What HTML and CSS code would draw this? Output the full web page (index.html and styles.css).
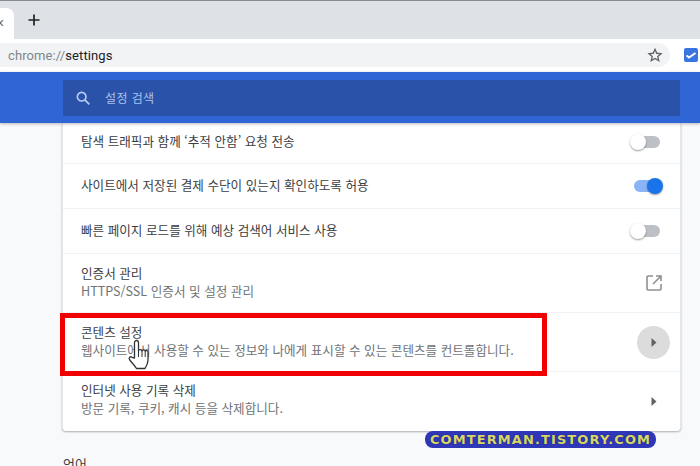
FILE: index.html
```html
<!DOCTYPE html>
<html lang="ko">
<head>
<meta charset="utf-8">
<title>설정</title>
<link rel="stylesheet" href="styles.css">
</head>
<body>
<div class="page">
  <div class="tabstrip">
    <div class="tab"><span class="tab-x">×</span></div>
    <svg class="plus" width="14" height="14" viewBox="0 0 14 14"><path d="M7 1.500V12.500M1.500 7H12.500" stroke="#202124" stroke-width="1.700" fill="none"/></svg>
  </div>
  <div class="toolbar">
    <div class="omnibox">
      <span class="url"><span class="scheme">chrome://</span>settings</span>
      <svg class="star" width="16" height="16" viewBox="0 0 24 24"><path d="M12 3.500l2.600 5.900 6.400.6-4.800 4.300 1.400 6.300L12 17.300l-5.600 3.300 1.400-6.300L3 10l6.400-.6z" fill="none" stroke="#5f6368" stroke-width="2"/></svg>
    </div>
    <div class="ext"><svg width="14" height="14" viewBox="0 0 14 14"><path d="M2.500 7.500L5 9.500l6.500-4.500" fill="none" stroke="#fff" stroke-width="2"/></svg></div>
  </div>
  <header class="bluebar">
    <div class="search">
      <svg width="16" height="16" viewBox="0 0 24 24"><circle cx="10" cy="10" r="6.500" fill="none" stroke="#b7cdf3" stroke-width="2.400"/><path d="M14.500 14.500L21.500 21.500" stroke="#b7cdf3" stroke-width="2.600"/></svg>
      <span class="search-text">설정 검색</span>
    </div>
  </header>
  <main class="content">
    <section class="card">
      <div class="row row-top"><div class="label text">탐색 트래픽과 함께 ‘추적 안함’ 요청 전송</div><span class="toggle"><i class="track"></i><i class="knob"></i></span></div>
      <div class="row row-short"><div class="label text">사이트에서 저장된 결제 수단이 있는지 확인하도록 허용</div><span class="toggle on"><i class="track"></i><i class="knob"></i></span></div>
      <div class="row row-short"><div class="label text">빠른 페이지 로드를 위해 예상 검색어 서비스 사용</div><span class="toggle"><i class="track"></i><i class="knob"></i></span></div>
      <div class="row row-tall">
        <div class="text"><div class="label">인증서 관리</div><div class="sub">HTTPS/SSL 인증서 및 설정 관리</div></div>
        <span class="action"><svg width="16" height="16" viewBox="0 0 16 16"><path d="M7 1H2a1 1 0 0 0-1 1v12a1 1 0 0 0 1 1h12a1 1 0 0 0 1-1V9M10 1h5v5M15 1L7 9" fill="none" stroke="#8d9094" stroke-width="1.600"/></svg></span>
      </div>
      <div class="row row-tall">
        <div class="text"><div class="label">콘텐츠 설정</div><div class="sub">웹사이트에서 사용할 수 있는 정보와 나에게 표시할 수 있는 콘텐츠를 컨트롤합니다.</div></div>
        <span class="action action-hover"><svg width="6" height="9" viewBox="0 0 6 9"><path d="M0.500 0L5.500 4.500L0.500 9Z" fill="#5f6368"/></svg></span>
      </div>
      <div class="row row-tall">
        <div class="text text-last"><div class="label">인터넷 사용 기록 삭제</div><div class="sub">방문 기록, 쿠키, 캐시 등을 삭제합니다.</div></div>
        <span class="action"><svg width="6" height="9" viewBox="0 0 6 9"><path d="M0.500 0L5.500 4.500L0.500 9Z" fill="#5f6368"/></svg></span>
      </div>
    </section>
    <h2 class="section-title">언어</h2>
  </main>
  <div class="redbox"></div>
  <svg class="hand" width="24" height="32" viewBox="0 0 24 32"><path d="M7.500 20V4.500a2 2 0 0 1 4 0V13c.2-1.800 3.300-1.800 3.500 0 .2-1.500 3-1.500 3.200.3 .3-1.200 2.800-1 2.800 1V22c0 4-2 7-3 8.500H9.500C8 28 5 25 2.500 21.500c-1.200-1.800 1-3.500 2.500-2.200z" fill="#fff" stroke="#333" stroke-width="1.300" stroke-linejoin="round"/><path d="M11.500 13v6M15 13v6M18.200 13.500V19" stroke="#333" stroke-width="1" fill="none"/></svg>
  <div class="watermark">COMTERMAN.TISTORY.COM</div>
</div>
</body>
</html>
```
FILE: styles.css
```css
* { box-sizing: border-box; }
html, body { margin: 0; padding: 0; }
body { background: #f8f9fa; font-family: "Noto Sans CJK KR", "Noto Sans", sans-serif; }
.page { position: relative; width: 700px; height: 466px; overflow: hidden; }
.tabstrip { height: 39px; background: #dee1e6; border-top: 1px solid #8a8d90; display: flex; align-items: center; }
.tab { width: 14px; height: 31px; margin-top: 7px; background: #fff; border-top-right-radius: 8px; position: relative; overflow: hidden; }
.tab-x { position: absolute; left: -4px; top: 7px; font: 14px/16px "Liberation Sans", sans-serif; color: #5f6368; }
.plus { margin-left: 13px; margin-top: -1px; }
.toolbar { height: 33px; background: #fff; display: flex; align-items: center; padding-bottom: 1px; }
.omnibox { width: 670px; height: 24px; background: #f1f3f4; border-radius: 0 12px 12px 0; display: flex; align-items: center; justify-content: space-between; padding: 0 7px 0 8px; }
.url { font: 13px "Roboto", "Liberation Sans", sans-serif; color: #202124; letter-spacing: .1px; }
.scheme { color: #80868b; }
.ext { width: 14px; height: 14px; margin-left: 14px; background: #3a74e0; border-radius: 2px; display: flex; }
.bluebar { height: 51px; background: #2f65d4; padding: 8px 20px 7px 63px; box-shadow: 0 1px 3px rgba(60,64,67,.35); position: relative; z-index: 1; }
.search { height: 36px; background: #2a52a8; display: flex; align-items: center; padding-left: 12px; gap: 14px; font-size: 12px; color: #a9c2ee; letter-spacing: .4px; }
.search-text { position: relative; bottom: 1px; }
.content { padding: 0 19px 0 62px; }
.card { background: #fff; border-left: 1px solid #e4e6e9; border-right: 1px solid #e4e6e9; border-radius: 0 0 4px 4px; box-shadow: 0 1px 2px rgba(60,64,67,.4); padding-left: 18px; }
.row { display: flex; align-items: center; justify-content: space-between; border-bottom: 1px solid #f0f1f2; margin-left: -18px; padding: 0 10px 0 18px; }
.row:last-child { border-bottom: 0; }
.row-top { height: 41px; padding-bottom: 3px; }
.row-short { height: 45px; }
.row-tall { height: 59px; }
.text { margin-bottom: 2px; }
.text-last { margin-bottom: 5px; }
.label { font-size: 12.600px; line-height: 18px; color: #3c4043; }
.sub { font-size: 12.600px; line-height: 18px; color: #6f7377; }
.toggle { position: relative; width: 30px; height: 16px; margin-right: 10px; flex: none; }
.track { position: absolute; left: 2px; right: 0; top: 2px; height: 12px; background: #bdc1c6; border-radius: 6px; }
.knob { position: absolute; left: 0; top: 0; width: 16px; height: 16px; background: #fff; border-radius: 50%; box-shadow: 0 1px 2px rgba(0,0,0,.4); }
.toggle.on .track { background: #8ab4f8; right: 0; left: 4px; }
.toggle.on .knob { left: auto; right: -3px; background: #1a73e8; }
.action { width: 33px; height: 33px; border-radius: 50%; display: flex; align-items: center; justify-content: center; flex: none; }
.action-hover { background: #dcdcdc; }
.section-title { margin: 24px 0 0 1px; font-size: 13px; line-height: 18px; font-weight: 400; color: #3c4043; }
.redbox { position: absolute; left: 60px; top: 313px; width: 487px; height: 63px; border: 5px solid #f00000; }
.hand { position: absolute; left: 127px; top: 338px; }
.watermark { position: absolute; left: 425px; top: 431px; width: 231px; height: 17px; background: #2f36b8; border-radius: 8px; color: #d7d767; font: 700 13px/17px "DejaVu Sans", sans-serif; letter-spacing: 1.100px; text-align: center; white-space: nowrap; text-shadow: 0 0 1px #14185a; }
```
